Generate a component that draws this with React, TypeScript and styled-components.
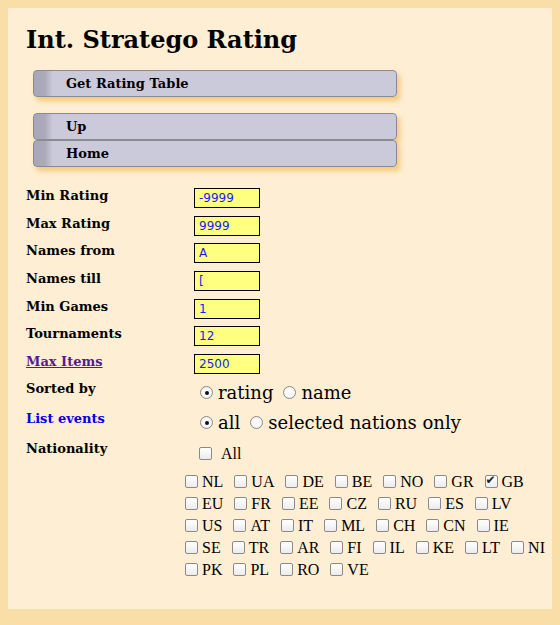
import React from 'react';
import styled, { createGlobalStyle } from 'styled-components';

const GlobalStyle = createGlobalStyle`
  html, body {
    margin: 0;
    background: #f9dea8;
  }
`;

const Panel = styled.div`
  margin: 8px;
  height: 601px;
  box-sizing: border-box;
  background: #feeed4;
  padding: 18px 0 0 18px;
  font-family: 'DejaVu Serif', serif;
  color: #000;
`;

const Title = styled.h1`
  margin: 0 0 16px 0;
  font-size: 24px;
  font-weight: bold;
  line-height: 28px;
`;

const NavGroup = styled.div<{ $gap: number }>`
  display: flex;
  flex-direction: column;
  margin: 0 0 ${p => p.$gap}px 7px;
  width: 364px;
`;

const NavButton = styled.div`
  height: 27px;
  box-sizing: border-box;
  border: 1px solid #8a8a96;
  border-radius: 4px;
  background: linear-gradient(to right, #a7a7b7 0, #ababbb 11px, #cbcadb 19px, #cbcadb 100%);
  box-shadow: 3px 4px 5px rgba(240, 190, 90, 0.75);
  padding-left: 32px;
  font-size: 13px;
  font-weight: bold;
  line-height: 25px;
  cursor: pointer;
`;

const FormGrid = styled.div`
  display: grid;
  grid-template-columns: 168px 1fr;
  grid-auto-rows: 27.7px;
  align-items: start;
`;

const Label = styled.div<{ $tone?: 'link' | 'blue' }>`
  font-size: 13px;
  font-weight: bold;
  line-height: 16px;
  color: ${p => (p.$tone === 'link' ? '#551a8b' : p.$tone === 'blue' ? '#0000ee' : '#000')};
  text-decoration: ${p => (p.$tone === 'link' ? 'underline' : 'none')};
`;

const Field = styled.input`
  width: 66px;
  height: 20px;
  box-sizing: border-box;
  margin: 0;
  border: 1px solid #000;
  background: #ffff80;
  color: #1a1aff;
  font-family: 'DejaVu Sans', sans-serif;
  font-size: 12px;
  padding: 0 4px;
  outline: none;
`;

const ChoiceGrid = styled.div`
  display: grid;
  grid-template-columns: 168px 1fr;
  grid-auto-rows: 30px;
  margin-top: -1px;
`;

const ChoiceRow = styled.div`
  display: flex;
  align-items: center;
  margin-top: -3px;
  padding-left: 6px;
  font-size: 18px;
  height: 30px;
`;

const Radio = styled.input.attrs({ type: 'radio' })`
  appearance: none;
  width: 13px;
  height: 13px;
  margin: 0 5px 0 0;
  border: 1px solid #8a8a8a;
  border-radius: 50%;
  background: radial-gradient(circle, #fff 0, #eee 100%);
  box-sizing: border-box;
  position: relative;
  flex: none;
  &:checked::after {
    content: '';
    position: absolute;
    left: 3.5px;
    top: 3.5px;
    width: 4px;
    height: 4px;
    border-radius: 50%;
    background: #111;
  }
`;

const ChoiceText = styled.span`
  margin-right: 10px;
`;

const Check = styled.input.attrs({ type: 'checkbox' })`
  appearance: none;
  width: 13px;
  height: 13px;
  margin: 0;
  border: 1px solid #8a8a8a;
  border-radius: 2px;
  background: linear-gradient(#fff, #ececec);
  box-sizing: border-box;
  position: relative;
  flex: none;
  &:checked::after {
    content: '✔';
    position: absolute;
    left: 0px;
    top: -3px;
    font-size: 12px;
    line-height: 14px;
    color: #222;
    font-family: 'DejaVu Sans', sans-serif;
  }
`;

const AllRow = styled.label`
  display: flex;
  align-items: center;
  padding-left: 5px;
  margin-top: -2px;
  font-family: 'Liberation Serif', serif;
  font-size: 16px;
  gap: 9px;
  height: 30px;
`;

const Nations = styled.div`
  display: flex;
  flex-direction: column;
  gap: 4px;
  margin: 2px 0 0 159px;
  font-family: 'Liberation Serif', serif;
  font-size: 16px;
`;

const NationRow = styled.div`
  display: flex;
  column-gap: 11px;
`;

const Nation = styled.label`
  display: flex;
  align-items: center;
  gap: 4px;
  height: 18px;
`;

const nationRows = [
  ['NL', 'UA', 'DE', 'BE', 'NO', 'GR', 'GB'],
  ['EU', 'FR', 'EE', 'CZ', 'RU', 'ES', 'LV'],
  ['US', 'AT', 'IT', 'ML', 'CH', 'CN', 'IE'],
  ['SE', 'TR', 'AR', 'FI', 'IL', 'KE', 'LT', 'NI'],
  ['PK', 'PL', 'RO', 'VE'],
];

const fields: { label: string; value: string; tone?: 'link' }[] = [
  { label: 'Min Rating', value: '-9999' },
  { label: 'Max Rating', value: '9999' },
  { label: 'Names from', value: 'A' },
  { label: 'Names till', value: '[' },
  { label: 'Min Games', value: '1' },
  { label: 'Tournaments', value: '12' },
  { label: 'Max Items', value: '2500', tone: 'link' },
];

const App: React.FC = () => {
  return (
    <>
      <GlobalStyle />
      <Panel>
        <Title>Int. Stratego Rating</Title>
        <NavGroup $gap={16}>
          <NavButton>Get Rating Table</NavButton>
        </NavGroup>
        <NavGroup $gap={21}>
          <NavButton>Up</NavButton>
          <NavButton>Home</NavButton>
        </NavGroup>
        <FormGrid>
          {fields.map(f => (
            <React.Fragment key={f.label}>
              <Label $tone={f.tone}>{f.label}</Label>
              <Field defaultValue={f.value} />
            </React.Fragment>
          ))}
        </FormGrid>
        <ChoiceGrid>
          <Label>Sorted by</Label>
          <ChoiceRow>
            <Radio name="sort" defaultChecked />
            <ChoiceText>rating</ChoiceText>
            <Radio name="sort" />
            <ChoiceText>name</ChoiceText>
          </ChoiceRow>
          <Label $tone="blue">List events</Label>
          <ChoiceRow>
            <Radio name="events" defaultChecked />
            <ChoiceText>all</ChoiceText>
            <Radio name="events" />
            <ChoiceText>selected nations only</ChoiceText>
          </ChoiceRow>
          <Label>Nationality</Label>
          <AllRow>
            <Check />
            All
          </AllRow>
        </ChoiceGrid>
        <Nations>
          {nationRows.map((row, i) => (
            <NationRow key={i}>
              {row.map(n => (
                <Nation key={n}>
                  <Check defaultChecked={n === 'GB'} />
                  {n}
                </Nation>
              ))}
            </NationRow>
          ))}
        </Nations>
      </Panel>
    </>
  );
};

export default App;
